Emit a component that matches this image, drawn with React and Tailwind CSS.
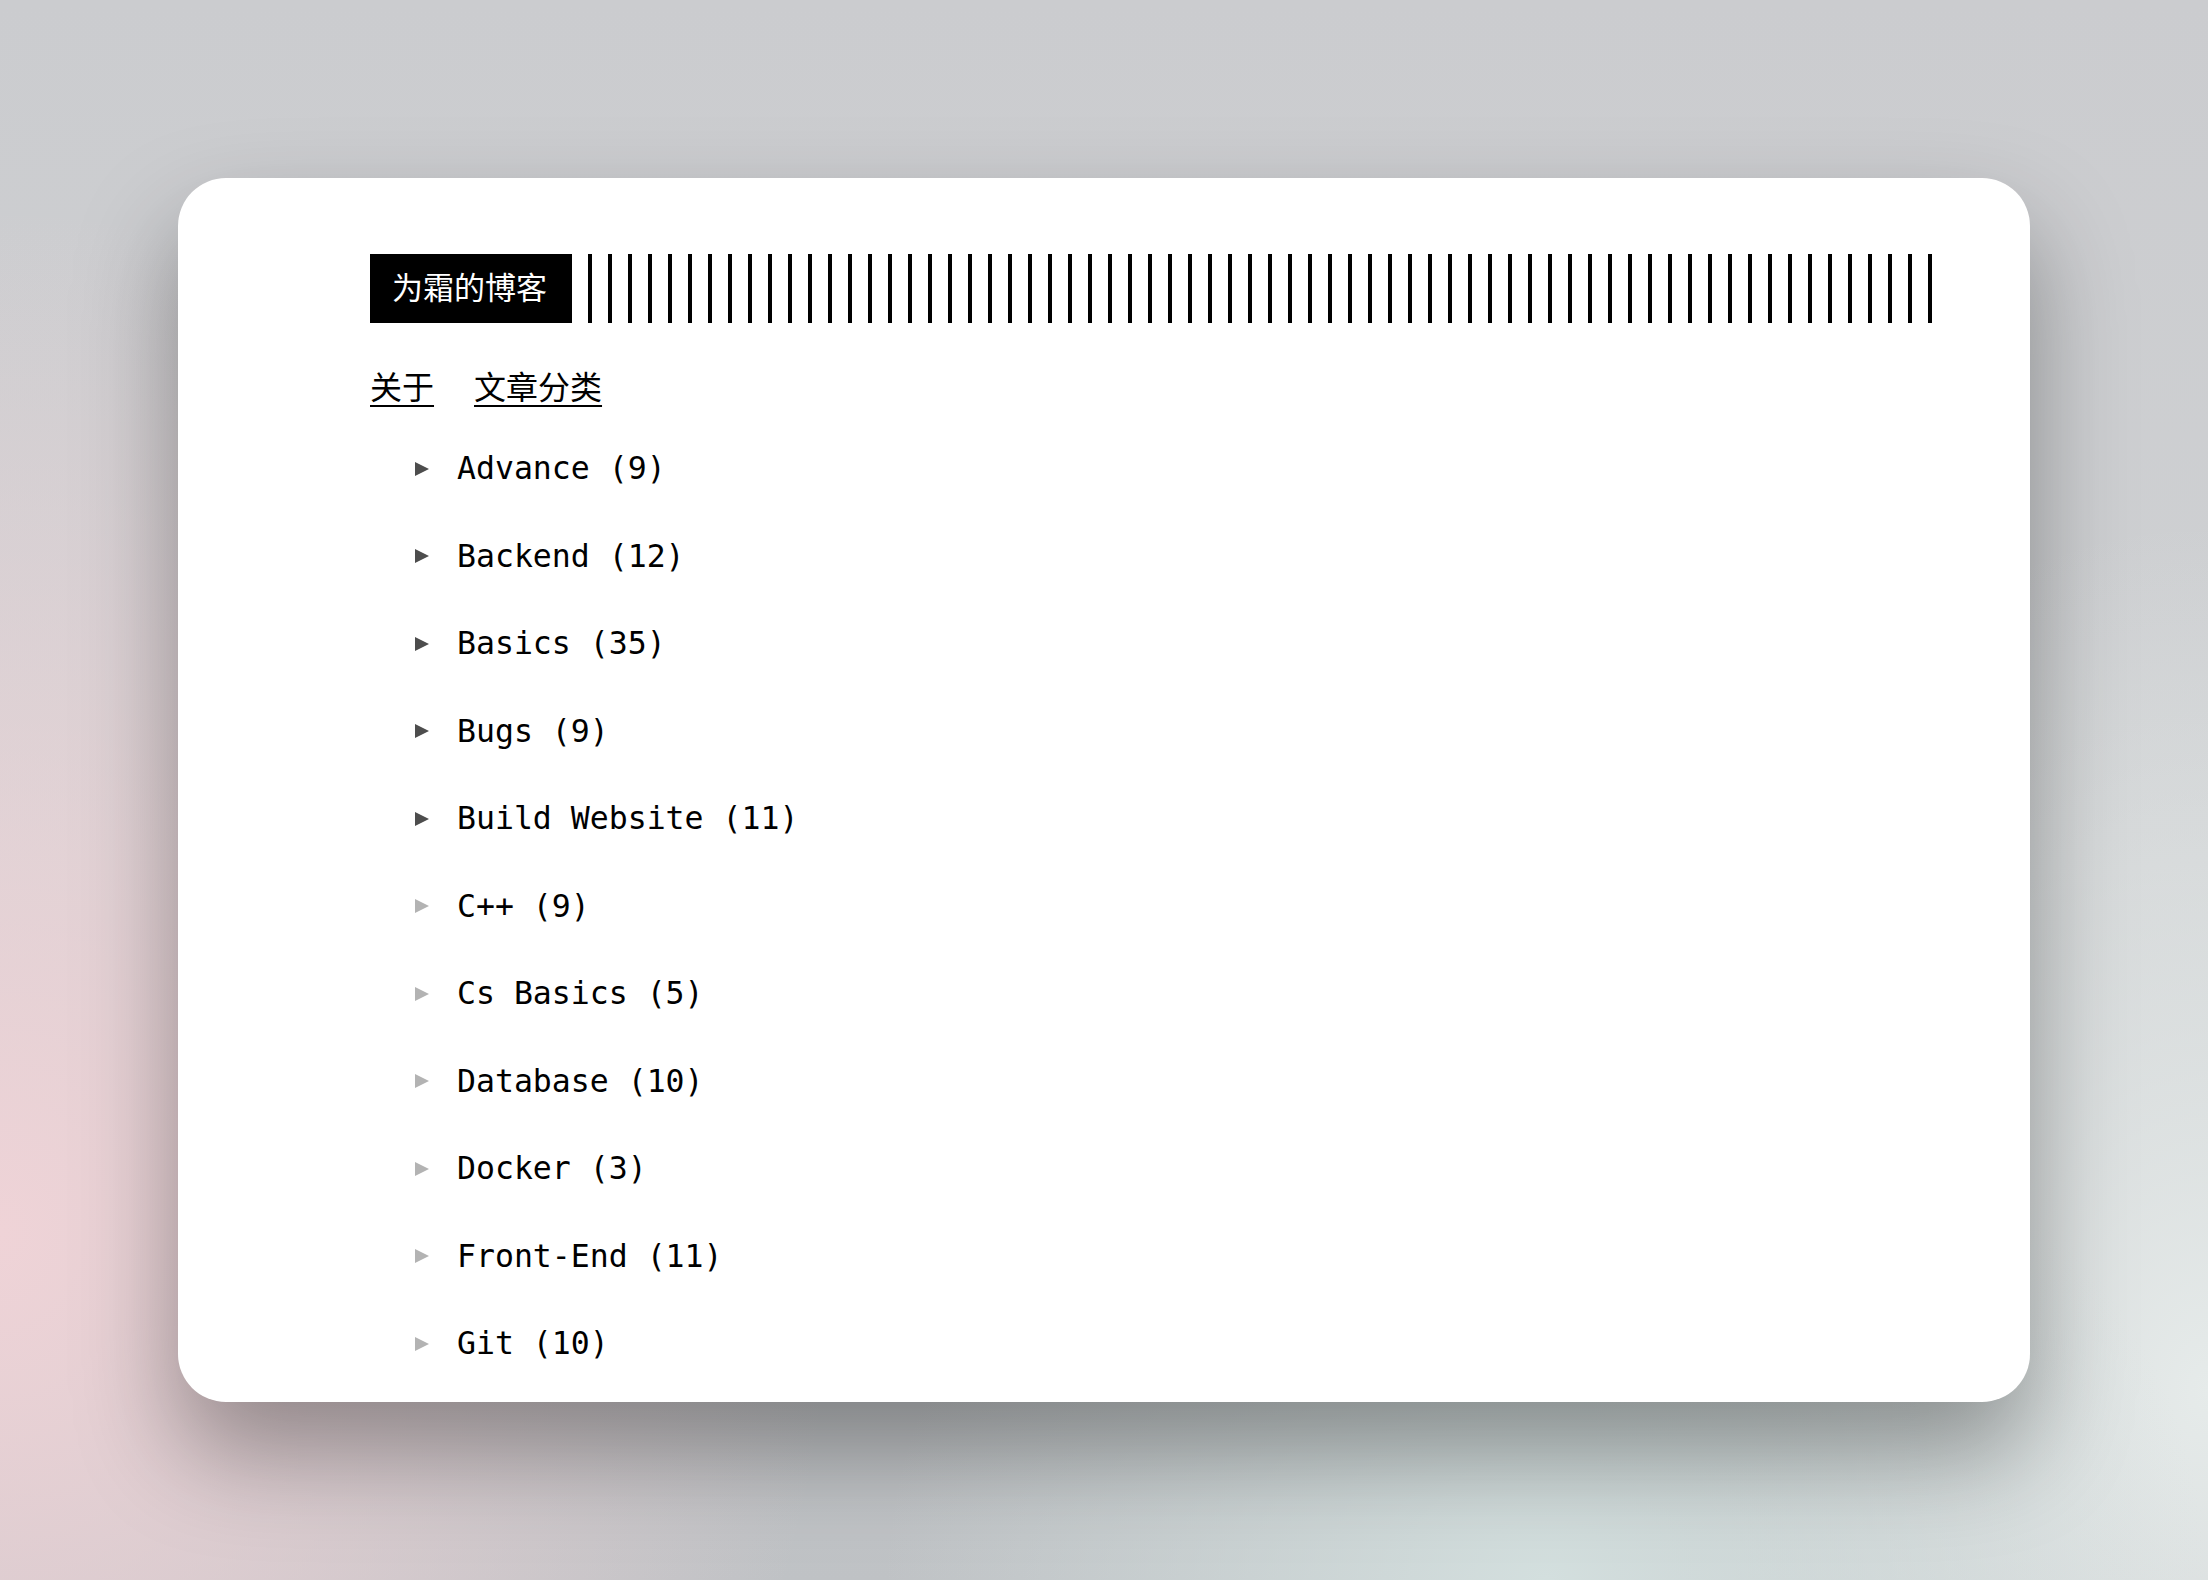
import React from "react";

const categories = [
  { name: "Advance", count: 9, open: true },
  { name: "Backend", count: 12, open: true },
  { name: "Basics", count: 35, open: true },
  { name: "Bugs", count: 9, open: true },
  { name: "Build Website", count: 11, open: true },
  { name: "C++", count: 9 },
  { name: "Cs Basics", count: 5 },
  { name: "Database", count: 10 },
  { name: "Docker", count: 3 },
  { name: "Front-End", count: 11 },
  { name: "Git", count: 10 },
];

const cjk = "font-['Noto_Sans_CJK_SC','Noto_Sans',sans-serif]";
const mono = "font-['DejaVu_Sans_Mono','Liberation_Mono',monospace]";

const Marker = ({ dark }) => (
  <svg width="14" height="14" viewBox="0 0 14 14" className="shrink-0">
    <polygon points="0,0 14,7 0,14" fill={dark ? "#4d4d4d" : "#b3b3b3"} />
  </svg>
);

const App = () => {
  const stripes = Array.from({ length: 68 });

  return (
    <div className="min-h-screen w-full flex items-center justify-center bg-[radial-gradient(ellipse_38%_65%_at_0%_78%,#efd3d7_0%,transparent_100%),radial-gradient(ellipse_30%_35%_at_70%_100%,#d3dfde_0%,transparent_100%),radial-gradient(ellipse_28%_55%_at_100%_88%,#e6ebea_0%,transparent_100%),linear-gradient(180deg,#cbcccf_0%,#cfd1d3_55%,#bfc2c5_100%)]">
      <div className="w-[1852px] h-[1224px] bg-white rounded-[48px] overflow-hidden shadow-[0_50px_100px_rgba(0,0,0,0.35)] pl-[192px] pt-[76px]">
        {/* header */}
        <div className="flex items-stretch h-[69px]">
          <div className={`${cjk} bg-black text-white text-[31px] leading-[31px] px-[22px] pt-[16px] w-[202px] whitespace-nowrap`}>
            为霜的博客
          </div>
          <div className="flex gap-4 ml-4">
            {stripes.map((_, i) => (
              <span key={i} className="w-1 h-full bg-black" />
            ))}
          </div>
        </div>

        {/* nav */}
        <nav className={`${cjk} flex gap-[40px] mt-[46px] text-[32px] leading-[32px] text-black`}>
          <a href="#" className="underline underline-offset-[6px] decoration-2">关于</a>
          <a href="#" className="underline underline-offset-[6px] decoration-2">文章分类</a>
        </nav>

        {/* categories */}
        <ul className={`${mono} flex flex-col gap-[56px] mt-[52px] pl-[45px] text-[31.5px] leading-[31.5px] text-black`}>
          {categories.map((c) => (
            <li key={c.name} className="flex items-center gap-[28px] whitespace-pre">
              <Marker dark={c.open} />
              <span>{`${c.name} (${c.count})`}</span>
            </li>
          ))}
        </ul>
      </div>
    </div>
  );
};

export default App;
